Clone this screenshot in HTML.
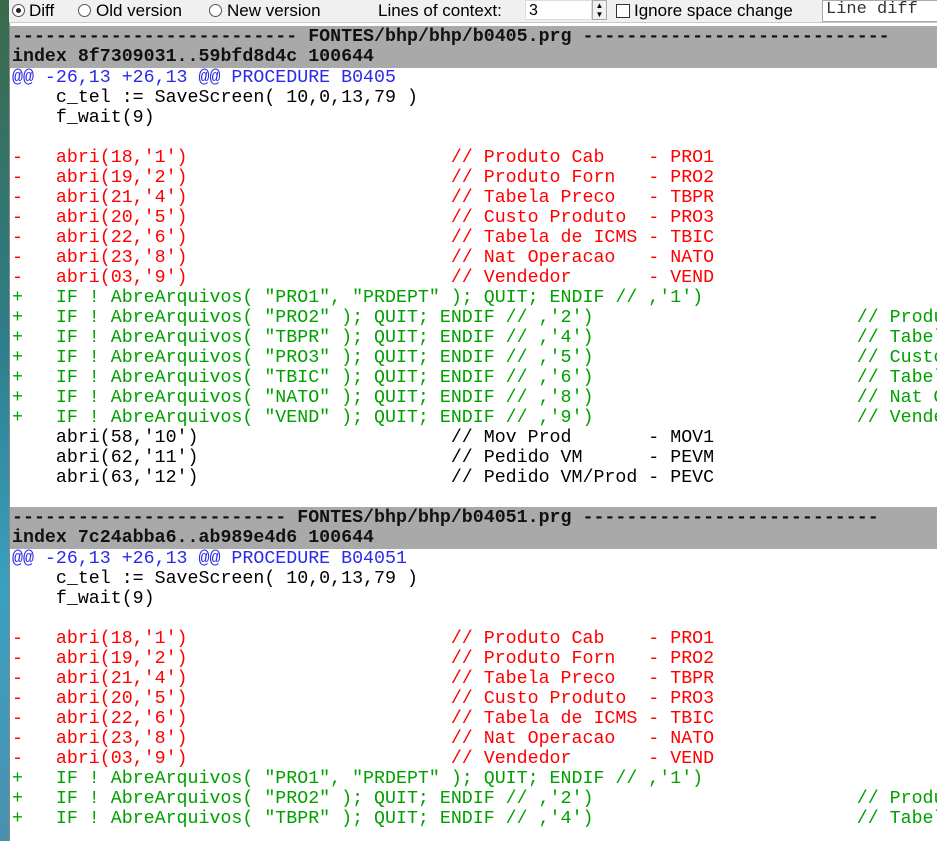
<!DOCTYPE html>
<html><head><meta charset="utf-8"><style>
html,body{margin:0;padding:0;width:937px;height:841px;overflow:hidden;background:#fff;}
#strip{position:absolute;left:0;top:0;width:9px;height:841px;background:linear-gradient(#3a6a4a,#2e7d8a 40%,#3aa0c0 70%,#4a90b0);}
#bar{position:absolute;left:9px;top:0;width:928px;height:22px;background:#f0f0f0;border-bottom:1px solid #c8c8c8;font-family:"Liberation Sans",sans-serif;font-size:17px;color:#000;}
#bar span{position:absolute;top:0;line-height:21px;white-space:nowrap;}
.rad{position:absolute;top:4px;width:11px;height:11px;border:1px solid #555;border-radius:50%;background:#fff;}
.rad.on::after{content:"";position:absolute;left:3px;top:3px;width:5px;height:5px;border-radius:50%;background:#222;}
#inp{position:absolute;left:516px;top:0;width:67px;height:20px;background:#fff;border:1px solid #ddd;font-size:16px;line-height:20px;padding-left:3px;box-sizing:border-box;}
#spin{position:absolute;left:583px;top:0;width:15px;height:20px;border:1px solid #aaa;box-sizing:border-box;background:#f0f0f0;font-size:8px;line-height:9px;text-align:center;}
#chk{position:absolute;left:607px;top:4px;width:12px;height:12px;border:1px solid #333;background:#fff;}
#ld{position:absolute;left:813px;top:0;width:124px;height:22px;background:#fff;border:1px solid #aaa;box-sizing:border-box;font-family:"Liberation Mono",monospace;font-size:17px;line-height:18px;padding-left:3px;color:#333;}
#code{position:absolute;left:9px;top:23px;width:928px;height:818px;border-left:1px solid #888;box-sizing:border-box;overflow:hidden;}
pre{margin:0;padding-left:2px;font-family:"Liberation Mono","Courier New",monospace;font-size:18.3px;line-height:20px;white-space:pre;}
.h{background:#a9a9a9;font-weight:bold;color:#111;margin-left:-2px;padding-left:2px;}
.a{color:#2a2ae8}.m{color:#f00}.p{color:#00a000}
</style></head><body>
<div id="strip"></div>
<div id="bar">
<div class="rad on" style="left:3px"></div><span style="left:20px">Diff</span>
<div class="rad" style="left:69px"></div><span style="left:87px">Old version</span>
<div class="rad" style="left:200px"></div><span style="left:218px">New version</span>
<span style="left:369px">Lines of context:</span>
<div id="inp">3</div><div id="spin">▲<br>▼</div>
<div id="chk"></div><span style="left:625px">Ignore space change</span>
<div id="ld">Line diff</div>
</div>
<div id="code"><div style="height:3px"></div><pre><div class="h" style="padding-top:1px;padding-bottom:1px">-------------------------- FONTES/bhp/bhp/b0405.prg ----------------------------
index 8f7309031..59bfd8d4c 100644</div><span class="a">@@ -26,13 +26,13 @@ PROCEDURE B0405</span>
    c_tel := SaveScreen( 10,0,13,79 )
    f_wait(9)

<span class="m">-   abri(18,'1')                        // Produto Cab    - PRO1
-   abri(19,'2')                        // Produto Forn   - PRO2
-   abri(21,'4')                        // Tabela Preco   - TBPR
-   abri(20,'5')                        // Custo Produto  - PRO3
-   abri(22,'6')                        // Tabela de ICMS - TBIC
-   abri(23,'8')                        // Nat Operacao   - NATO
-   abri(03,'9')                        // Vendedor       - VEND</span>
<span class="p">+   IF ! AbreArquivos( "PRO1", "PRDEPT" ); QUIT; ENDIF // ,'1')
+   IF ! AbreArquivos( "PRO2" ); QUIT; ENDIF // ,'2')                        // Produto Forn
+   IF ! AbreArquivos( "TBPR" ); QUIT; ENDIF // ,'4')                        // Tabela Preco
+   IF ! AbreArquivos( "PRO3" ); QUIT; ENDIF // ,'5')                        // Custo Produto
+   IF ! AbreArquivos( "TBIC" ); QUIT; ENDIF // ,'6')                        // Tabela de ICMS
+   IF ! AbreArquivos( "NATO" ); QUIT; ENDIF // ,'8')                        // Nat Operacao
+   IF ! AbreArquivos( "VEND" ); QUIT; ENDIF // ,'9')                        // Vendedor</span>
    abri(58,'10')                       // Mov Prod       - MOV1
    abri(62,'11')                       // Pedido VM      - PEVM
    abri(63,'12')                       // Pedido VM/Prod - PEVC
</pre><div style="height:19px"></div><pre><div class="h" style="padding-top:1px;padding-bottom:1px">------------------------- FONTES/bhp/bhp/b04051.prg ---------------------------
index 7c24abba6..ab989e4d6 100644</div><span class="a">@@ -26,13 +26,13 @@ PROCEDURE B04051</span>
    c_tel := SaveScreen( 10,0,13,79 )
    f_wait(9)

<span class="m">-   abri(18,'1')                        // Produto Cab    - PRO1
-   abri(19,'2')                        // Produto Forn   - PRO2
-   abri(21,'4')                        // Tabela Preco   - TBPR
-   abri(20,'5')                        // Custo Produto  - PRO3
-   abri(22,'6')                        // Tabela de ICMS - TBIC
-   abri(23,'8')                        // Nat Operacao   - NATO
-   abri(03,'9')                        // Vendedor       - VEND</span>
<span class="p">+   IF ! AbreArquivos( "PRO1", "PRDEPT" ); QUIT; ENDIF // ,'1')
+   IF ! AbreArquivos( "PRO2" ); QUIT; ENDIF // ,'2')                        // Produto Forn
+   IF ! AbreArquivos( "TBPR" ); QUIT; ENDIF // ,'4')                        // Tabela Preco</span>
</pre></div>
</body></html>
